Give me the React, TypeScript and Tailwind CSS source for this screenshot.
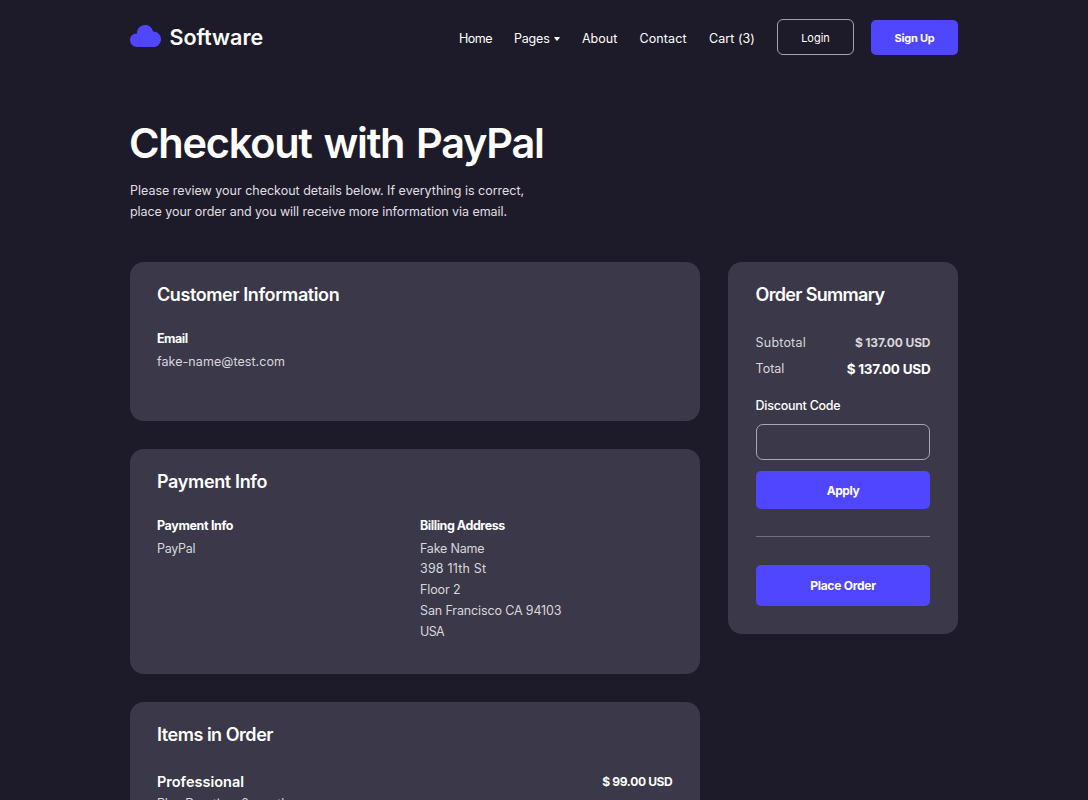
import React from "react";

function T({ children, c = "" }: { children: React.ReactNode; c?: string }) {
  return <span className={`block whitespace-nowrap ${c}`}>{children}</span>;
}

const card = "rounded-[14px] bg-[#3b384a]";
const heading = "text-[18px] leading-[24px] font-semibold";
const label = "text-[12.5px] leading-[16px] font-bold";
const body = "text-[12.5px] leading-[20.8px] text-[#d8d7dc]";

export default function App() {
  return (
    <div className="h-[800px] overflow-hidden bg-[#1d1b29] font-['Inter',sans-serif] text-white">
      <div className="mx-auto w-[828px]">
        <header className="flex h-[75px] items-center">
          <svg className="-mt-[3px] h-[22px] w-[31px]" viewBox="0 0 31 22" fill="#5146ff">
            <path d="M7 22A7 7 0 0 1 0 15C0 11.300 3 8.500 7 8.500 6.800 3.600 10.500 0 15 0c4 0 7.300 2.700 8 6.500C27.600 6.500 31 10 31 14.200S27.600 22 23.500 22Z" />
          </svg>
          <T c="-mt-[2px] ml-[8.5px] text-[21.5px] leading-[28px] font-semibold">Software</T>
          <nav className="mt-[2px] ml-auto flex items-center text-[12.5px] leading-[20px]">
            <T c="w-[55px] tracking-[-0.5px]">Home</T>
            <div className="flex w-[68px] items-center gap-[4px]">
              <T c="tracking-[-0.2px]">Pages</T>
              <svg className="h-[4px] w-[6px]" viewBox="0 0 6 4" fill="white"><path d="M.6 0h4.800q.6.3.2.8L3.500 3.500q-.5.500-1 0L.4.8Q0 .3.6 0Z" /></svg>
            </div>
            <T c="w-[57.5px]">About</T>
            <T c="w-[69.5px] tracking-[0.1px]">Contact</T>
            <T c="w-[46px] tracking-[0.06px]">Cart (3)</T>
          </nav>
          <button className="ml-[22px] -mt-[1px] flex h-[36px] w-[77px] items-center justify-center rounded-[6px] border border-[#a5a4aa] text-[11px]"><T c="mt-[3px]">Login</T></button>
          <button className="ml-[17px] flex h-[35px] w-[87px] items-center justify-center rounded-[5px] bg-[#5146ff] text-[11px] font-bold tracking-[-0.2px]"><T c="mt-[1px]">Sign Up</T></button>
        </header>
        <h1 className="mt-[42px] -ml-[1px] flex h-[52px] items-center text-[41.5px] leading-[52px] font-semibold tracking-[-1.25px] [word-spacing:2.5px]"><T>Checkout with PayPal</T></h1>
        <div className="mt-[11px] text-[12.5px] leading-[21px] text-[#e0dfe3]">
          <T>Please review your checkout details below. If everything is correct,</T>
          <T c="tracking-[-0.06px]">place your order and you will receive more information via email.</T>
        </div>
        <main className="mt-[40px] flex items-start gap-[28px]">
          <div className="flex w-[570px] flex-col gap-[28px]">
            <section className={`${card} h-[159px] px-[27px] pt-[21px]`}>
              <T c={`${heading} tracking-[-0.4px]`}>Customer Information</T>
              <T c={`mt-[24px] tracking-[-0.5px] ${label}`}>Email</T>
              <T c={`mt-[5px] tracking-[0.06px] ${body}`}>fake-name@test.com</T>
            </section>
            <section className={`${card} h-[225px] px-[27px] pt-[21px]`}>
              <T c={`${heading} tracking-[-0.35px]`}>Payment Info</T>
              <div className="mt-[24px] flex">
                <div className="w-[263px]">
                  <T c={`${label} tracking-[-0.35px]`}>Payment Info</T>
                  <T c={`mt-[5px] tracking-[-0.3px] ${body}`}>PayPal</T>
                </div>
                <div>
                  <T c={`${label} tracking-[-0.45px]`}>Billing Address</T>
                  <div className="mt-[4.6px]">
                    <T c={`${body} tracking-[-0.2px]`}>Fake Name</T>
                    <T c={`${body} tracking-[0.2px]`}>398 11th St</T>
                    <T c={`${body} tracking-[-0.1px]`}>Floor 2</T>
                    <T c={`${body} tracking-[-0.13px]`}>San Francisco CA 94103</T>
                    <T c={`${body} tracking-[-0.6px]`}>USA</T>
                  </div>
                </div>
              </div>
            </section>
            <section className={`${card} h-[160px] px-[27px] pt-[21px]`}>
              <T c={`${heading} tracking-[-0.47px]`}>Items in Order</T>
              <div className="mt-[24px] flex items-center justify-between">
                <T c="text-[14.5px] leading-[20px] font-semibold">Professional</T>
                <T c="mt-[1px] mr-[0.6px] text-[12px] leading-[20px] font-bold tracking-[-0.35px]">$ 99.00 USD</T>
              </div>
              <T c={`mt-[2px] tracking-[-0.15px] ${body}`}>Plan Duration: 6 months</T>
            </section>
          </div>
          <aside className={`${card} h-[372px] w-[230px] px-[27.6px] pt-[21px]`}>
            <T c={`${heading} tracking-[-0.68px]`}>Order Summary</T>
            <div className="mt-[26px] flex items-center justify-between leading-[20px] text-[#d8d7dc]">
              <T c="text-[12.5px] tracking-[0.2px]">Subtotal</T>
              <T c="text-[12px] font-bold tracking-[-0.13px]">$ 137.00 USD</T>
            </div>
            <div className="mt-[6px] flex items-center justify-between leading-[20px]">
              <T c="text-[12.5px] text-[#d8d7dc]">Total</T>
              <T c="text-[13.5px] font-bold tracking-[-0.25px]">$ 137.00 USD</T>
            </div>
            <T c="mt-[17px] text-[12.5px] leading-[20px] font-medium tracking-[-0.25px]">Discount Code</T>
            <input className="mt-[8px] block h-[36px] w-full rounded-[7px] border border-[#a9a8b0] bg-transparent" />
            <button className="mt-[11px] flex h-[38px] w-full items-center justify-center rounded-[5px] bg-[#5146ff] text-[12px] font-bold tracking-[-0.4px]"><T c="mt-[1px]">Apply</T></button>
            <hr className="mt-[27px] border-[#72707d]" />
            <button className="mt-[28px] flex h-[41px] w-full items-center justify-center rounded-[5px] bg-[#5146ff] text-[12px] font-bold tracking-[-0.25px]"><T c="mt-[1px]">Place Order</T></button>
          </aside>
        </main>
      </div>
    </div>
  );
}
